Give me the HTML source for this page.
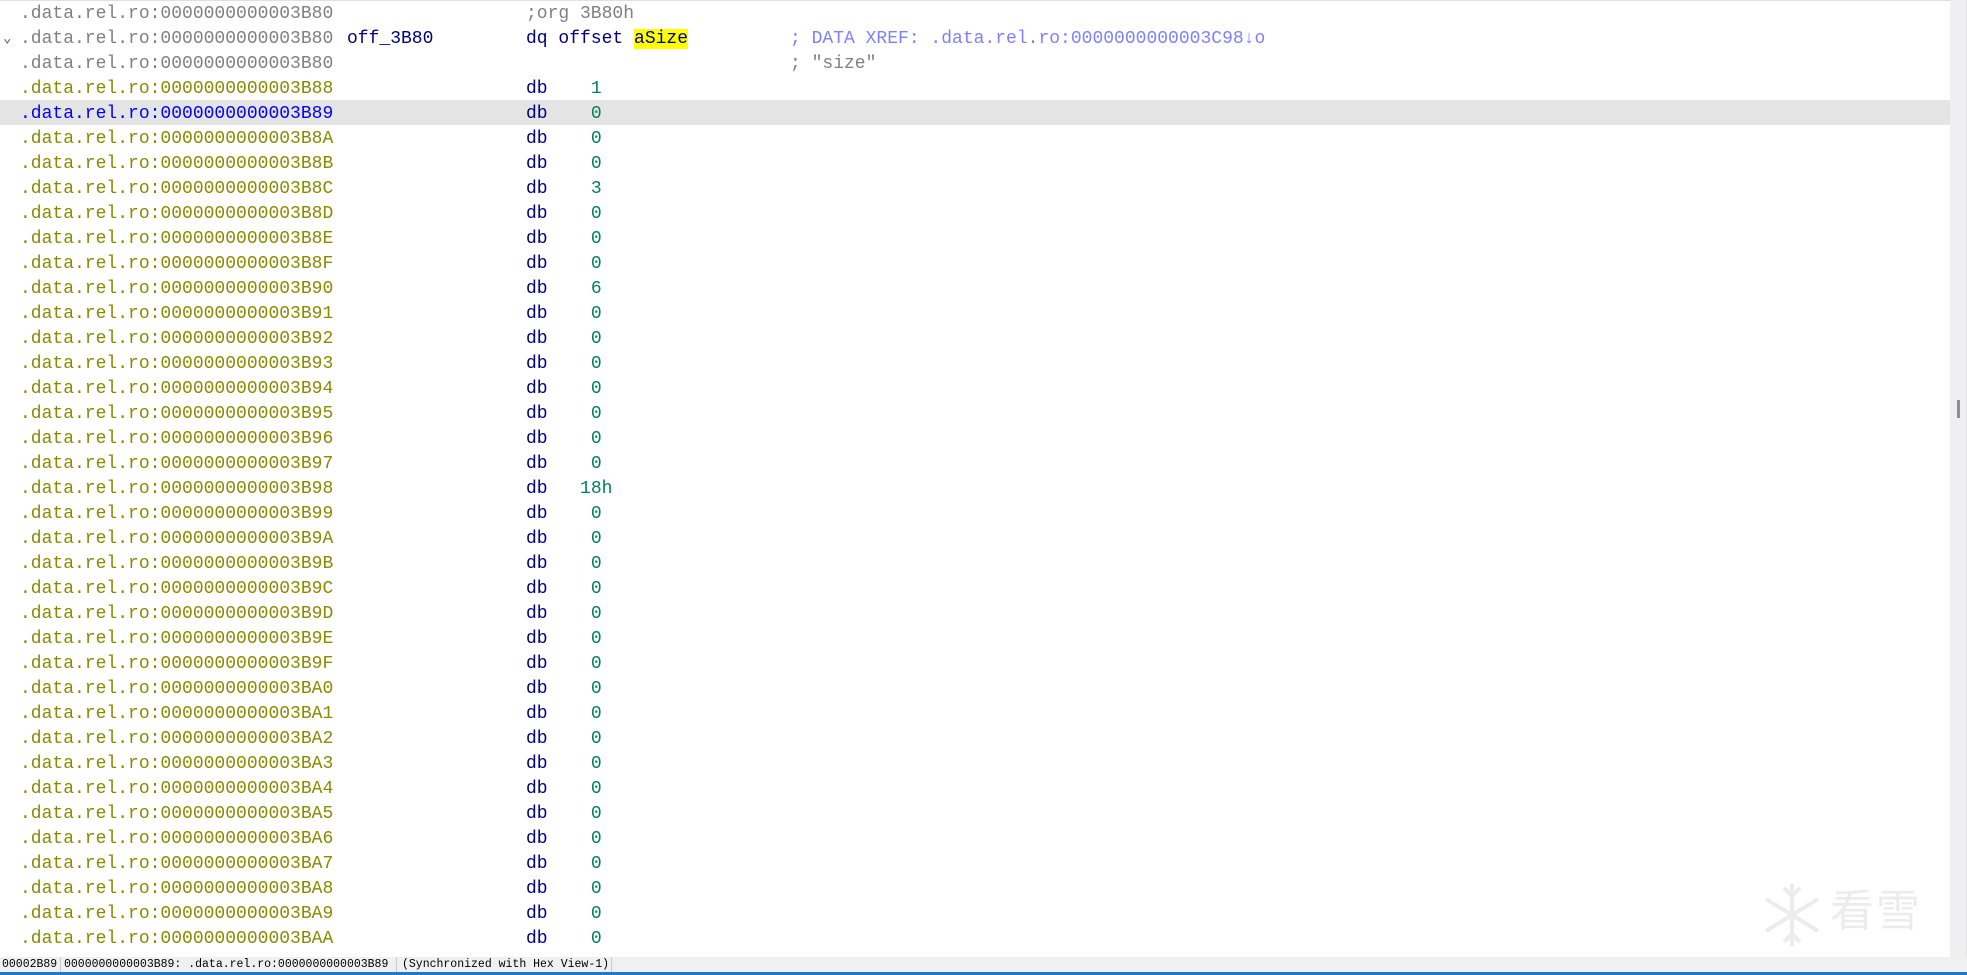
<!DOCTYPE html>
<html><head><meta charset="utf-8"><style>
html,body{margin:0;padding:0;width:1967px;height:975px;overflow:hidden;background:#fff;}
body{position:relative;font-family:"Liberation Mono",monospace;font-size:18px;}
.r{position:absolute;left:0;width:1950px;height:25px;line-height:25px;white-space:pre;}
.r span{position:absolute;top:2px;}
.a{left:20px;color:#8a8a00;}
.b{color:#0000ff;}
.hl{background:#e4e4e4;}
.op{left:526px;color:#000080;}
.n{left:526px;color:#000080;}
.n i{font-style:normal;color:#008060;}
.lbl{left:347px;color:#000080;}
.cm{left:790px;color:#7f7fff;}
.cg{left:790px;color:#808080;}
.y{background:#ffff00;}
.r span.g{color:#808080;}
#sb{position:absolute;left:1950px;top:0;width:16px;height:957px;background:#efefef;}
#th{position:absolute;left:1957px;top:400px;width:3px;height:18px;background:#909090;}
#rl{position:absolute;left:1966px;top:0;width:1px;height:975px;background:#dde6ef;}
#st{position:absolute;left:0;top:957px;width:1967px;height:16px;background:#f0f0f0;font-size:11.5px;line-height:16px;white-space:pre;color:#000;}
#st span{position:absolute;top:0;}
#st .s{width:1px;height:16px;background:#c8c8c8;}
#bl{position:absolute;left:0;top:972px;width:1967px;height:3px;background:#1979ca;}
#tl{position:absolute;left:0;top:0;width:1950px;height:1px;background:#e0e0e0;}
#wm{position:absolute;left:1830px;top:875px;font-family:"Noto Sans CJK SC",sans-serif;font-size:44px;color:#ececec;letter-spacing:2px;}
</style></head><body>
<div id="tl"></div>
<div class="r" style="top:0"><span class="a g">.data.rel.ro:0000000000003B80</span><span class="op g">;org 3B80h</span></div>
<div class="r" style="top:25px"><span style="left:3px;color:#555;font-size:14px">⌄</span><span class="a g">.data.rel.ro:0000000000003B80</span><span class="lbl">off_3B80</span><span class="op">dq offset <span class="y" style="position:static">aSize</span></span><span class="cm">; DATA XREF: .data.rel.ro:0000000000003C98↓o</span></div>
<div class="r" style="top:50px"><span class="a g">.data.rel.ro:0000000000003B80</span><span class="cg">; "size"</span></div>
<div id="rows"></div>
<div id="sb"></div><div id="th"></div><div id="rl"></div>
<svg style="position:absolute;left:1760px;top:880px" width="64" height="70" viewBox="0 0 64 70"><g stroke="#ececec" stroke-width="4" fill="none"><path d="M32 4V66M6 19L58 51M6 51L58 19M24 8L32 16L40 8M24 62L32 54L40 62"/></g></svg>
<div id="wm">看雪</div>
<div id="st"><span style="left:2px">00002B89</span><span class="s" style="left:60px"></span><span style="left:64px">0000000000003B89: .data.rel.ro:0000000000003B89</span><span class="s" style="left:396px"></span><span style="left:402px">(Synchronized with Hex View-1)</span><span class="s" style="left:611px"></span></div>
<div id="bl"></div>
<script>
var v=[["3B88","1"],["3B89","0"],["3B8A","0"],["3B8B","0"],["3B8C","3"],["3B8D","0"],["3B8E","0"],["3B8F","0"],["3B90","6"],["3B91","0"],["3B92","0"],["3B93","0"],["3B94","0"],["3B95","0"],["3B96","0"],["3B97","0"],["3B98","18h"],["3B99","0"],["3B9A","0"],["3B9B","0"],["3B9C","0"],["3B9D","0"],["3B9E","0"],["3B9F","0"],["3BA0","0"],["3BA1","0"],["3BA2","0"],["3BA3","0"],["3BA4","0"],["3BA5","0"],["3BA6","0"],["3BA7","0"],["3BA8","0"],["3BA9","0"],["3BAA","0"]];
var h="";
for(var i=0;i<v.length;i++){var t=(i+3)*25;var num=v[i][1];var pad=num.length==3?"   ":"    ";
h+='<div class="r'+(i==1?' hl':'')+'" style="top:'+t+'px"><span class="a'+(i==1?' b':'')+'">.data.rel.ro:000000000000'+v[i][0]+'</span><span class="n">db'+pad+'<i>'+num+'</i></span></div>';}
document.getElementById("rows").outerHTML=h;
</script>
</body></html>
